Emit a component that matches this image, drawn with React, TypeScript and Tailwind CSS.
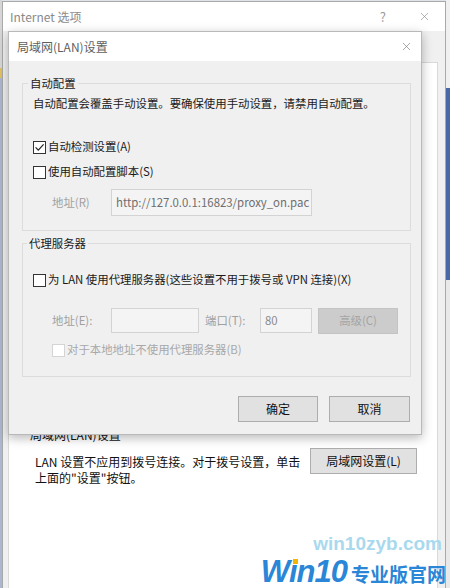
import { X } from "lucide-react"

function Box({ checked, disabled }: { checked?: boolean; disabled?: boolean }) {
  return (
    <span
      className={`flex size-[13px] shrink-0 items-center justify-center border bg-white ${
        disabled ? "border-[#d4d4d4]" : "border-[#333333]"
      }`}
    >
      {checked && (
        <svg width="11" height="11" viewBox="0 0 11 11">
          <path d="M1.6 5.4 L4.3 8.2 L9.6 2.4" fill="none" stroke="#222222" strokeWidth="1.2" />
        </svg>
      )}
    </span>
  )
}

function Check({ label, checked, disabled, className = "" }: { label: string; checked?: boolean; disabled?: boolean; className?: string }) {
  return (
    <label className={`flex h-[20px] items-center gap-[2px] ${disabled ? "text-[#a8a8a8]" : "text-[#1a1a1a]"} ${className}`}>
      <Box checked={checked} disabled={disabled} />
      <span>{label}</span>
    </label>
  )
}

export default function App() {
  return (
    <div className="relative flex h-[588px] w-[450px] overflow-hidden bg-[#dfe3ea] font-['Noto_Sans_CJK_SC',sans-serif]">
      {/* desktop edge, left */}
      <div className="flex w-[2px] flex-col">
        <div className="h-[68px] bg-[#d6d6d6]" />
        <div className="h-[10px] bg-[#e0c060]" />
        <div className="flex-1 bg-[#aab6d2]" />
      </div>

      {/* Internet 选项 window */}
      <div className="mt-[1px] flex w-[444px] flex-col border border-b-0 border-[#a9a9a9]">
        <div className="flex h-[29px] items-center bg-white pl-[7px] pr-[14px] text-[12px] text-[#8a8a8a]">
          <span>Internet 选项</span>
          <span className="ml-auto mr-[32px] text-[13px] text-[#9a9a9a]">?</span>
          <X className="size-[13px] text-[#8a8a8a]" strokeWidth={1.2} />
        </div>
        <div className="flex flex-1 flex-col bg-[#f0f0f0] pl-[5px] pr-[7px]">
          <div className="h-[31px]" />
          <div className="flex flex-1 flex-col border border-b-0 border-[#d9d9d9] bg-white pl-[21px] pr-[20px] pt-[364px] text-[12px] text-[#111111]">
            <div className="leading-[16px]">局域网(LAN)设置</div>
            <div className="mt-[5px] flex items-start">
              <p className="ml-[5px] mt-[6px] leading-[16px]">
                LAN 设置不应用到拨号连接。对于拨号设置，单击
                <br />
                上面的"设置"按钮。
              </p>
              <button className="ml-auto h-[26px] w-[107px] border border-[#adadad] bg-[#e1e1e1] text-[12px] text-[#111111]">
                局域网设置(L)
              </button>
            </div>
          </div>
        </div>
      </div>

      {/* desktop edge, right */}
      <div className="flex w-[4px] flex-col">
        <div className="h-[88px] bg-[#f0f0f0]" />
        <div className="h-[192px] bg-[#4a67a8]" />
        <div className="flex-1 bg-[#e9e9e9]" />
      </div>

      {/* 局域网(LAN)设置 dialog */}
      <div className="absolute left-[8px] top-[31px] flex h-[404px] w-[414px] flex-col border border-[#b9b9b9] bg-[#f0f0f0] shadow-[0_3px_10px_rgba(0,0,0,0.28)]">
        <div className="flex h-[29px] items-center bg-white pl-[8px] pr-[8px] text-[12px] text-[#5f5f5f]">
          <span>局域网(LAN)设置</span>
          <X className="ml-auto size-[13px] text-[#6a6a6a]" strokeWidth={1.1} />
        </div>
        <div className="flex flex-1 flex-col pl-[13px] pr-[10px] text-[11.4px]">
          <fieldset className="mt-[14px] border border-[#dcdcdc] pb-[14px]">
            <legend className="ml-[5px] px-[2px] leading-[16px] text-[#1a1a1a]">自动配置</legend>
            <div className="pl-[10px]">
              <p className="mt-[4px] leading-[16px] text-[#1a1a1a]">自动配置会覆盖手动设置。要确保使用手动设置，请禁用自动配置。</p>
              <Check className="mt-[26px]" label="自动检测设置(A)" checked />
              <Check className="mt-[5px]" label="使用自动配置脚本(S)" />
              <div className="mt-[7px] flex items-center pl-[19px]">
                <span className="w-[59px] text-[#a0a0a0]">地址(R)</span>
                <div className="flex h-[27px] w-[201px] items-center border border-[#d3d3d3] bg-[#f4f4f4] pl-[4px] text-[#6e6e6e]">
                  http://127.0.0.1:16823/proxy_on.pac
                </div>
              </div>
            </div>
          </fieldset>

          <fieldset className="mt-[4px] border border-[#dcdcdc] pb-[16px]">
            <legend className="ml-[4px] px-[2px] leading-[16px] text-[#1a1a1a]">代理服务器</legend>
            <div className="pl-[10px]">
              <Check className="mt-[19px]" label="为 LAN 使用代理服务器(这些设置不用于拨号或 VPN 连接)(X)" />
              <div className="mt-[17px] flex h-[27px] items-center pl-[19px] text-[#a0a0a0]">
                <span className="w-[59px]">地址(E):</span>
                <div className="h-[25px] w-[88px] border border-[#d3d3d3] bg-[#f4f4f4]" />
                <span className="ml-[6px] w-[55px]">端口(T):</span>
                <div className="flex h-[25px] w-[52px] items-center border border-[#d3d3d3] bg-[#f4f4f4] pl-[4px] text-[#8a8a8a]">80</div>
                <button className="ml-[6px] h-[26px] w-[80px] border border-[#c4c4c4] bg-[#cccccc] text-[#a4a4a4]">高级(C)</button>
              </div>
              <Check className="ml-[19px] mt-[6px]" label="对于本地地址不使用代理服务器(B)" disabled />
            </div>
          </fieldset>

          <div className="mr-[1px] mt-[19px] flex justify-end gap-[11px] text-[12px] text-[#111111]">
            <button className="h-[26px] w-[80px] border border-[#adadad] bg-[#e1e1e1]">确定</button>
            <button className="h-[26px] w-[81px] border border-[#adadad] bg-[#e1e1e1]">取消</button>
          </div>
        </div>
      </div>

      {/* watermark */}
      <div className="absolute bottom-[-3px] right-[4px] flex flex-col items-end">
        <span className="mr-[4px] font-['Liberation_Sans',sans-serif] text-[19px] font-bold leading-[22px] text-[#a9d9ee]">
          win10zyb.com
        </span>
        <div className="flex items-baseline">
          <span className="font-['Liberation_Sans',sans-serif] text-[31px] font-bold italic leading-[34px] tracking-[-1px] text-[#2a86d6]">
            W<span className="relative">ı<span className="absolute left-[4px] top-[5px] size-[5px] bg-[#f5b400]" /></span>n10
          </span>
          <span className="ml-[4px] text-[19px] font-bold leading-[34px] text-[#2a86d6]">专业版官网</span>
        </div>
      </div>
    </div>
  )
}
